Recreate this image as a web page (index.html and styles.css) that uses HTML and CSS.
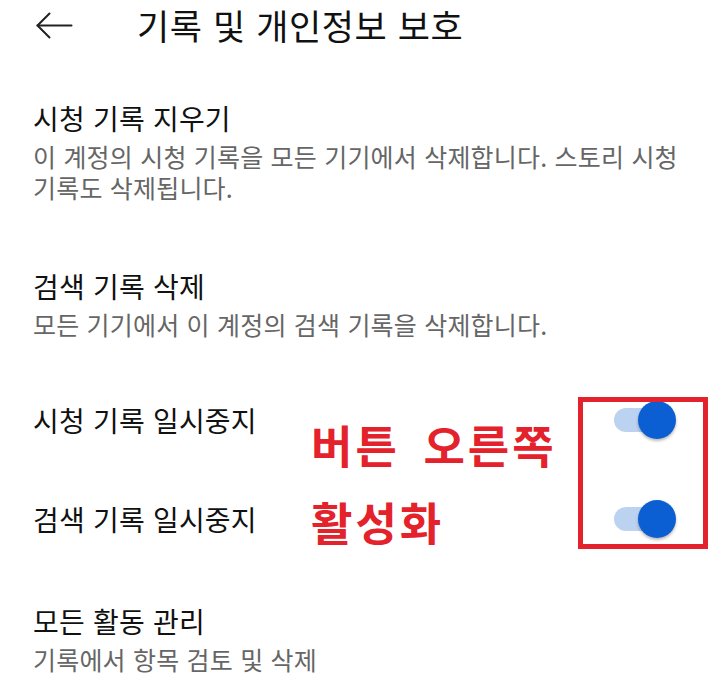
FILE: index.html
```html
<!DOCTYPE html>
<html lang="ko">
<head>
<meta charset="utf-8">
<title>기록 및 개인정보 보호</title>
<link rel="stylesheet" href="styles.css">
</head>
<body>
<div class="screen">
  <header class="appbar">
    <span class="back" aria-label="뒤로">
      <svg width="37" height="27" viewBox="0 0 37 27" fill="none" stroke="#222" stroke-width="2" stroke-linecap="round" stroke-linejoin="round">
        <path d="M13.5 1.5 L1.5 13.5 L13.5 25.5"/>
        <path d="M1.5 13.5 H35.5"/>
      </svg>
    </span>
    <h1 class="appbar-title">기록 및 개인정보 보호</h1>
  </header>

  <ul class="settings">
    <li class="item">
      <div class="item-title">시청 기록 지우기</div>
      <div class="item-sub">이 계정의 시청 기록을 모든 기기에서 삭제합니다. 스토리 시청 기록도 삭제됩니다.</div>
    </li>
    <li class="item">
      <div class="item-title">검색 기록 삭제</div>
      <div class="item-sub">모든 기기에서 이 계정의 검색 기록을 삭제합니다.</div>
    </li>
    <li class="item item-switch">
      <div class="item-title">시청 기록 일시중지</div>
      <span class="switch is-on"><span class="track"></span><span class="thumb"></span></span>
    </li>
    <li class="item item-switch">
      <div class="item-title">검색 기록 일시중지</div>
      <span class="switch is-on"><span class="track"></span><span class="thumb"></span></span>
    </li>
    <li class="item">
      <div class="item-title">모든 활동 관리</div>
      <div class="item-sub">기록에서 항목 검토 및 삭제</div>
    </li>
  </ul>

  <div class="note-box"></div>
  <div class="note-text">
    <div class="note-line">버튼 오른쪽</div>
    <div class="note-line">활성화</div>
  </div>
</div>
</body>
</html>
```

FILE: styles.css
```css
html, body {
  margin: 0;
  padding: 0;
  background: #fff;
}

body {
  font-family: "Noto Sans CJK KR", "Noto Sans", sans-serif;
  color: #111;
  word-break: keep-all;
}

.screen {
  position: relative;
  width: 720px;
  height: 683px;
  overflow: hidden;
}

/* top app bar */
.appbar {
  height: 50px;
  display: flex;
  align-items: center;
  padding-left: 36px;
}

.back {
  display: flex;
  width: 37px;
  height: 27px;
}

.appbar-title {
  margin: 0 0 0 64px;
  font-size: 35px;
  font-weight: 400;
  line-height: 44px;
  letter-spacing: 0.6px;
  color: #111;
}

/* settings list */
.settings {
  list-style: none;
  margin: 18px 0 0;
  padding: 0;
}

.item {
  padding: 33px 30px 33px 33px;
}

.item-title {
  font-size: 28px;
  line-height: 34px;
  letter-spacing: 0.2px;
  color: #111;
}

.item-sub {
  margin-top: 6px;
  font-size: 25px;
  line-height: 31px;
  letter-spacing: 0.2px;
  color: #666;
}

.item-switch {
  display: flex;
  align-items: center;
  justify-content: space-between;
  padding-top: 28px;
  padding-bottom: 33px;
}

/* switch */
.switch {
  position: relative;
  width: 62px;
  height: 38px;
  margin-right: 14px;
  flex: none;
}

.switch .track {
  position: absolute;
  left: 0;
  top: 7px;
  width: 56px;
  height: 24px;
  border-radius: 12px;
  background: #bcd2f1;
}

.switch .thumb {
  position: absolute;
  right: 0;
  top: 0;
  width: 38px;
  height: 38px;
  border-radius: 50%;
  background: #0b5fd2;
  box-shadow: 0 2px 3px rgba(0, 0, 0, 0.28);
}

/* red annotation */
.note-box {
  position: absolute;
  left: 578px;
  top: 397px;
  width: 120px;
  height: 142px;
  border: 5px solid #e4222b;
}

.note-text {
  position: absolute;
  left: 311px;
  top: 416px;
  color: #e4222b;
  font-weight: 700;
  font-size: 45px;
  letter-spacing: 3px;
  word-spacing: 8px;
}

.note-line {
  line-height: 58px;
}

.note-line + .note-line {
  margin-top: 19px;
}
```
